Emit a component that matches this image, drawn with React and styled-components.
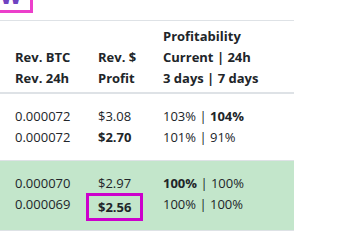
import styled, { createGlobalStyle } from 'styled-components';

const GlobalStyle = createGlobalStyle`
  html, body {
    margin: 0;
    padding: 0;
    background: #ffffff;
  }
  body {
    font-family: "Open Sans", "Liberation Sans", sans-serif;
    font-size: 13px;
    line-height: 21px;
    color: #212529;
  }
`;

const Page = styled.div`
  width: 337px;
  height: 241px;
  overflow: hidden;
`;

const TitleStrip = styled.div`
  height: 21px;
  overflow: hidden;
`;

const Highlight = styled.div`
  width: 43px;
  height: 30px;
  margin: -17px 0 0 -10px;
  border: 3px solid ${props => props.color};
  box-sizing: border-box;
  display: flex;
  align-items: flex-end;
  justify-content: flex-end;
  padding-right: 8px;
  overflow: hidden;
`;

const TitleText = styled.span`
  font-weight: 700;
  font-size: 26px;
  line-height: 26px;
  color: #6f42c1;
  margin-bottom: 3px;
`;

const Table = styled.table`
  width: 294px;
  border-collapse: collapse;
  table-layout: fixed;
  margin-top: -1px;
`;

const Col = styled.col`
  width: ${props => props.w}px;
`;

const Th = styled.th`
  text-align: left;
  vertical-align: bottom;
  font-weight: 700;
  padding: 5px 12px 3px ${props => (props.first ? 15 : 12)}px;
  border-top: 1px solid #dee2e6;
  border-bottom: 2px solid #dee2e6;
  white-space: nowrap;
`;

const Row = styled.tr`
  background: ${props => (props.success ? '#c3e6cb' : 'transparent')};
`;

const Td = styled.td`
  padding: 12px 12px 12px ${props => (props.first ? 15 : 12)}px;
  border-top: 1px solid ${props => (props.success ? '#8fd19e' : '#dee2e6')};
  border-bottom: 1px solid #dee2e6;
  vertical-align: top;
  white-space: nowrap;
`;

const Line = styled.div`
  line-height: 21px;
`;

const Boxed = styled.span`
  display: inline-block;
  margin: -1px 0 -6px -12px;
  padding: 0 9px 0 9px;
  border: 3px solid #cc00cc;
  line-height: 22px;
  font-weight: 700;
`;

const rows = [
  {
    btc: ['0.000072', '0.000072'],
    usd: [{ v: '$3.08' }, { v: '$2.70', bold: true }],
    prof: [
      [{ v: '103%' }, { v: '104%', bold: true }],
      [{ v: '101%' }, { v: '91%' }],
    ],
  },
  {
    success: true,
    btc: ['0.000070', '0.000069'],
    usd: [{ v: '$2.97' }, { v: '$2.56', bold: true, boxed: true }],
    prof: [
      [{ v: '100%', bold: true }, { v: '100%' }],
      [{ v: '100%' }, { v: '100%' }],
    ],
  },
];

const Val = ({ item }) => {
  if (item.boxed) return <Boxed>{item.v}</Boxed>;
  return item.bold ? <b>{item.v}</b> : <span>{item.v}</span>;
};

export default function App() {
  return (
    <Page>
      <GlobalStyle />
      <TitleStrip>
        <Highlight color="#ec3fcb">
          <TitleText>w</TitleText>
        </Highlight>
      </TitleStrip>
      <Table>
        <colgroup>
          <Col w={86} />
          <Col w={65} />
          <Col w={143} />
        </colgroup>
        <thead>
          <tr>
            <Th first>
              <Line>Rev. BTC</Line>
              <Line>Rev. 24h</Line>
            </Th>
            <Th>
              <Line>Rev. $</Line>
              <Line>Profit</Line>
            </Th>
            <Th>
              <Line>Profitability</Line>
              <Line>Current | 24h</Line>
              <Line>3 days | 7 days</Line>
            </Th>
          </tr>
        </thead>
        <tbody>
          {rows.map((r, i) => (
            <Row key={i} success={r.success}>
              <Td first success={r.success}>
                {r.btc.map((b, j) => (
                  <Line key={j}>{b}</Line>
                ))}
              </Td>
              <Td success={r.success}>
                {r.usd.map((u, j) => (
                  <Line key={j}>
                    <Val item={u} />
                  </Line>
                ))}
              </Td>
              <Td success={r.success}>
                {r.prof.map((p, j) => (
                  <Line key={j}>
                    <Val item={p[0]} /> | <Val item={p[1]} />
                  </Line>
                ))}
              </Td>
            </Row>
          ))}
        </tbody>
      </Table>
    </Page>
  );
}
